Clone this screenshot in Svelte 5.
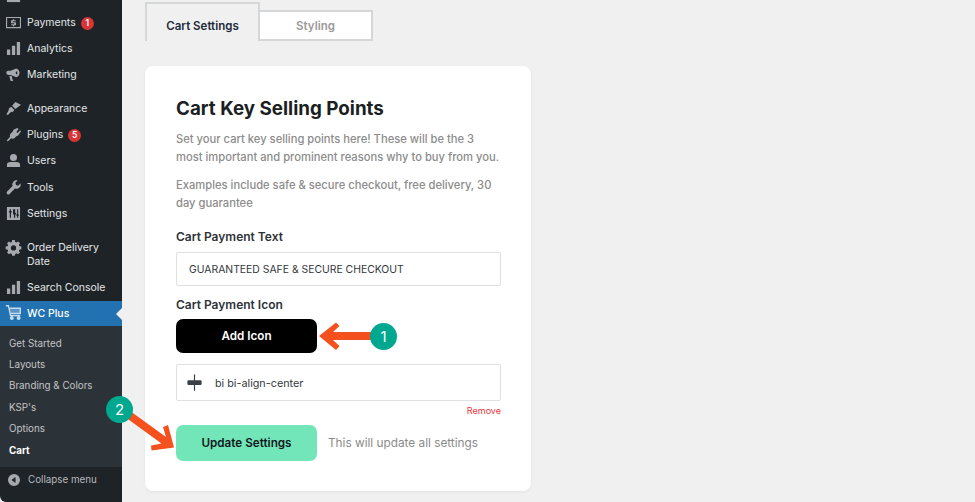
<script>
  const menu = [
    { id: 'products', label: '' },
    { id: 'payments', label: 'Payments', badge: 1 },
    { id: 'analytics', label: 'Analytics' },
    { id: 'marketing', label: 'Marketing' },
    { sep: true },
    { id: 'appearance', label: 'Appearance' },
    { id: 'plugins', label: 'Plugins', badge: 5 },
    { id: 'users', label: 'Users' },
    { id: 'tools', label: 'Tools' },
    { id: 'settings', label: 'Settings' },
    { sep: true },
    { id: 'gear', label: 'Order Delivery Date' },
    { id: 'analytics', label: 'Search Console' },
  ];

  const submenu = ['Get Started', 'Layouts', 'Branding & Colors', "KSP's", 'Options', 'Cart'];

  const icons = {
    products: 'M1 12h14v3H1z',
    payments: 'M0 2h16v12H0zM1.200 3.200v9.600h13.600V3.200zM7.300 4.500h1.400v1h1.800v1.200H7.300v.9h2.400q1 0 1 1v1.400q0 1-1 1h-1v1H7.300v-1H5.500V9.800h3.200v-.9H6.300q-1 0-1-1V6.500q0-1 1-1h1z',
    analytics: 'M1 9h3.500v6H1zM6.300 5h3.500v10H6.300zM11.500 1H15v14h-3.500z',
    marketing: 'M11 1.500a5 5 0 0 1 0 9.500L5 8.500H2.500a2 2 0 0 1 0-4.500H5zM3.500 9.500H6l1.500 5.500H5zM12 4.500a1.700 1.700 0 0 0 0 3.400z',
    appearance: 'M10 1l6 3-6 4.500-3.500-3.500zM5.500 6l3.500 3.500-2 2.500-1.500-.5L2 15 .5 14 3 9.500 3 8z',
    plugins: 'M12 1l1.500 1.200-2.500 3 1.500 1.200 2.500-3L16 4.500l-3 4.500-2 .8-1.500 1.700q-2 1.500-4 .5L2 15.500.8 14.300l3.500-3.800q-.8-2 .7-3.700L7 5l1-2z',
    users: 'M8 1a3.600 3.600 0 0 1 0 7.500A3.600 3.600 0 0 1 8 1zM1 15v-2.500Q1 9.500 5 9.500h6q4 0 4 3V15z',
    tools: 'M15.500 3.500a4.500 4.500 0 0 1-6 5.500L3.800 14.800a1.800 1.800 0 0 1-2.600-2.600L7 6.500a4.500 4.500 0 0 1 5.500-6L10 3l.6 2.400L13 6z',
    settings: 'M1 1h14v14H1zM4 3.500v2H3V7h1v5.500h1.300V7h1V5.500h-1v-2zM7.500 3.500v5.500h1v3.500h1.300V9h1V7.500H9.800v-4zM11.800 3.500v5.500h-.8v1.500h.8v2H13v-2h.8V9H13V3.500z',
    gear: 'M6.600 0h2.800l.4 2 1.400.6 1.700-1.100 2 2-1.100 1.700.6 1.400 2 .4v2.800l-2 .4-.6 1.400 1.100 1.700-2 2-1.700-1.100-1.400.6-.4 2H6.600l-.4-2-1.400-.6-1.700 1.100-2-2 1.100-1.700-.6-1.400-2-.4V7l2-.4.6-1.400-1.100-1.700 2-2 1.700 1.100 1.400-.6zM8 5.600a2.800 2.800 0 1 0 0 5.600 2.800 2.800 0 0 0 0-5.600z',
  };
</script>

<div class="page">
  <aside class="sidebar">
    <nav class="menu">
      {#each menu as item}
        {#if item.sep}
          <div class="sep"></div>
        {:else}
          <div class="item">
            <svg class="icon" viewBox="0 0 16 16" aria-hidden="true"><path fill-rule="evenodd" d={icons[item.id]}></path></svg>
            <span class="label">
              {item.label}
              {#if item.badge}<span class="badge">{item.badge}</span>{/if}
            </span>
          </div>
        {/if}
      {/each}

      <div class="item current">
        <svg class="icon cart" viewBox="0 0 20 20" fill="none" stroke="currentColor" stroke-width="1.600" aria-hidden="true">
          <path d="M1 2h3l2.500 11.500H18"></path>
          <path d="M5 5h13v6H6.200" fill="currentColor" fill-opacity="0.350"></path>
          <circle cx="8" cy="16.500" r="1.500" fill="currentColor"></circle>
          <circle cx="16" cy="16.500" r="1.500" fill="currentColor"></circle>
        </svg>
        <span class="label">WC Plus</span>
      </div>

      <ul class="submenu">
        {#each submenu as sub}
          <li class:active={sub === 'Cart'}>{sub}</li>
        {/each}
      </ul>

      <div class="collapse">
        <svg viewBox="0 0 12 12" aria-hidden="true">
          <path fill-rule="evenodd" d="M6 0a6 6 0 1 1 0 12A6 6 0 0 1 6 0zM7.500 3 3.500 6l4 3z"></path>
        </svg>
        <span>Collapse menu</span>
      </div>
    </nav>
  </aside>

  <main class="content">
    <div class="tabs">
      <div class="tab on">Cart Settings</div>
      <div class="tab">Styling</div>
    </div>

    <section class="card">
      <h2>Cart Key Selling Points</h2>
      <p class="lead">Set your cart key selling points here! These will be the 3 most important and prominent reasons why to buy from you.</p>
      <p class="lead second">Examples include safe &amp; secure checkout, free delivery, 30 day guarantee</p>

      <div class="field-label first">Cart Payment Text</div>
      <div class="input text">GUARANTEED SAFE &amp; SECURE CHECKOUT</div>

      <div class="field-label icon-label">Cart Payment Icon</div>
      <button class="btn add">Add Icon</button>

      <div class="input icon-input">
        <svg viewBox="0 0 16 16" aria-hidden="true">
          <path d="M8 1a.5.5 0 0 1 .5.5V6h-1V1.500A.5.5 0 0 1 8 1zm0 14a.5.5 0 0 1-.5-.5V10h1v4.500a.5.5 0 0 1-.5.5zM2 7a1 1 0 0 1 1-1h10a1 1 0 0 1 1 1v2a1 1 0 0 1-1 1H3a1 1 0 0 1-1-1V7z"></path>
        </svg>
        <span>bi bi-align-center</span>
      </div>
      <div class="remove">Remove</div>

      <div class="actions">
        <button class="btn update">Update Settings</button>
        <span class="hint">This will update all settings</span>
      </div>
    </section>
  </main>

  <svg class="callouts" viewBox="0 0 975 502" aria-hidden="true">
    <polygon points="319,336 336,322.500 339.500,326 333,332 372,332 372,340 333,340 339.500,346 336,350" fill="#f4511e"></polygon>
    <polygon points="174,447.500 151.500,450.500 151,445.500 161.500,443.500 119.500,413 124.500,407 166,437 163,427 168,425" fill="#f4511e"></polygon>
  </svg>
  <div class="step one">1</div>
  <div class="step two">2</div>
</div>

<style>
  :global(body) {
    margin: 0;
    background: #f0f0f1;
    overflow: hidden;
  }

  .page {
    width: 975px;
    height: 502px;
    position: relative;
    display: flex;
    overflow: hidden;
    font-family: Inter, "Noto Sans", sans-serif;
    background: #f0f0f1;
  }

  .sidebar {
    width: 122px;
    flex: none;
    background: #1d2327;
    color: #e4e6e7;
    border-bottom-left-radius: 6px;
    overflow: hidden;
  }

  .menu {
    margin-top: -16.7px;
  }

  .item {
    display: flex;
    align-items: flex-start;
    min-height: 26.2px;
    font-size: 10.5px;
    line-height: 14px;
  }

  .icon {
    width: 15px;
    height: 15px;
    flex: none;
    margin: 5px 6px 0;
    fill: #a7aaad;
    overflow: visible;
  }

  .label {
    padding: 6px 0;
    flex: 1;
  }

  .sep {
    height: 8px;
  }

  .badge {
    display: inline-block;
    width: 13px;
    height: 13px;
    line-height: 13px;
    border-radius: 50%;
    margin-left: 2px;
    background: #d63638;
    color: #fff;
    font-size: 8.5px;
    font-weight: 600;
    text-align: center;
  }

  .current {
    background: #2271b1;
    color: #fff;
    position: relative;
    height: 25px;
    min-height: 25px;
    align-items: center;
  }

  .current::after {
    content: "";
    position: absolute;
    right: 0;
    top: 7px;
    border: 6px solid transparent;
    border-left: 0;
    border-right-color: #f0f0f1;
  }

  .cart {
    width: 17px;
    height: 17px;
    margin: -3px 5px 0;
    color: #c4dcee;
    fill: none;
  }

  .current .label {
    font-weight: 500;
  }

  .submenu {
    list-style: none;
    margin: 0;
    padding: 6.5px 0 5.5px 9px;
    background: #2c3338;
    font-size: 9.8px;
    color: #c3c4c7;
  }

  .submenu li {
    height: 21.4px;
    line-height: 21.4px;
  }

  .submenu li.active {
    color: #fff;
    font-weight: 700;
  }

  .collapse {
    display: flex;
    align-items: center;
    gap: 8px;
    height: 36px;
    padding: 0 0 10px 8px;
    box-sizing: border-box;
    font-size: 9.8px;
    color: #b6b9bc;
  }

  .collapse svg {
    width: 12px;
    height: 12px;
    fill: #a7aaad;
  }

  .content {
    padding: 2px 0 0 23px;
  }

  .tabs {
    display: flex;
    align-items: flex-end;
    height: 39px;
  }

  .tab {
    box-sizing: border-box;
    width: 113px;
    height: 31px;
    padding-top: 1px;
    border: 2px solid #d5d6d7;
    border-left: 0;
    background: #fff;
    color: #9a9a9a;
    font-size: 11.5px;
    font-weight: 600;
    display: flex;
    align-items: center;
    justify-content: center;
  }

  .tab.on {
    width: 115px;
    height: 39px;
    background: #f0f0f1;
    color: #1d2b3a;
    border: 2px solid #d5d6d7;
    border-bottom: 0;
    padding-top: 7px;
  }

  .card {
    box-sizing: border-box;
    width: 386px;
    height: 425px;
    margin-top: 25px;
    padding: 31px 30px 0 31px;
    background: #fff;
    border-radius: 8px;
    box-shadow: 0 1px 3px rgba(0, 0, 0, 0.06);
  }

  h2 {
    margin: 0;
    font-size: 18.8px;
    line-height: 24px;
    font-weight: 700;
    color: #1b1f23;
  }

  .lead {
    margin: 9px 0 0;
    font-size: 11.2px;
    line-height: 18px;
    font-weight: 500;
    color: #8c8c8c;
  }

  .lead.second {
    margin-top: 10px;
  }

  .field-label {
    font-size: 12px;
    font-weight: 600;
    line-height: 16px;
    color: #2e3338;
  }

  .field-label.first {
    margin-top: 17px;
  }

  .field-label.icon-label {
    margin-top: 11px;
  }

  .input {
    box-sizing: border-box;
    width: 325px;
    display: flex;
    align-items: center;
    background: #fff;
    border: 1px solid #e0e0e0;
    border-radius: 2px;
    font-size: 10.4px;
    color: #33383d;
  }

  .input.text {
    height: 34px;
    margin-top: 7px;
    padding-left: 12px;
  }

  .btn {
    display: block;
    width: 141px;
    border: 0;
    border-radius: 7px;
    font-family: inherit;
    font-size: 11.7px;
    font-weight: 600;
    cursor: pointer;
  }

  .add {
    height: 34px;
    margin-top: 6px;
    background: #000;
    color: #fff;
  }

  .icon-input {
    height: 37px;
    margin-top: 11px;
    padding-left: 8px;
    gap: 11px;
    font-size: 10.8px;
  }

  .icon-input span {
    padding-top: 1px;
  }

  .icon-input svg {
    width: 19px;
    height: 19px;
    fill: #3a4046;
  }

  .remove {
    width: 325px;
    margin-top: 4px;
    text-align: right;
    font-size: 9px;
    line-height: 11px;
    color: #f0343a;
  }

  .actions {
    display: flex;
    align-items: center;
    gap: 11px;
    margin-top: 9px;
  }

  .update {
    height: 36px;
    background: #72e6b9;
    color: #10181c;
  }

  .hint {
    font-size: 11.8px;
    color: #8a8a8a;
  }

  .callouts {
    position: absolute;
    inset: 0;
    width: 975px;
    height: 502px;
    pointer-events: none;
  }

  .step {
    position: absolute;
    width: 27px;
    height: 27px;
    line-height: 27px;
    border-radius: 50%;
    background: #00a88f;
    color: #fff;
    font-size: 15px;
    text-align: center;
  }

  .step.one {
    left: 370px;
    top: 323px;
  }

  .step.two {
    left: 106px;
    top: 396px;
  }
</style>
